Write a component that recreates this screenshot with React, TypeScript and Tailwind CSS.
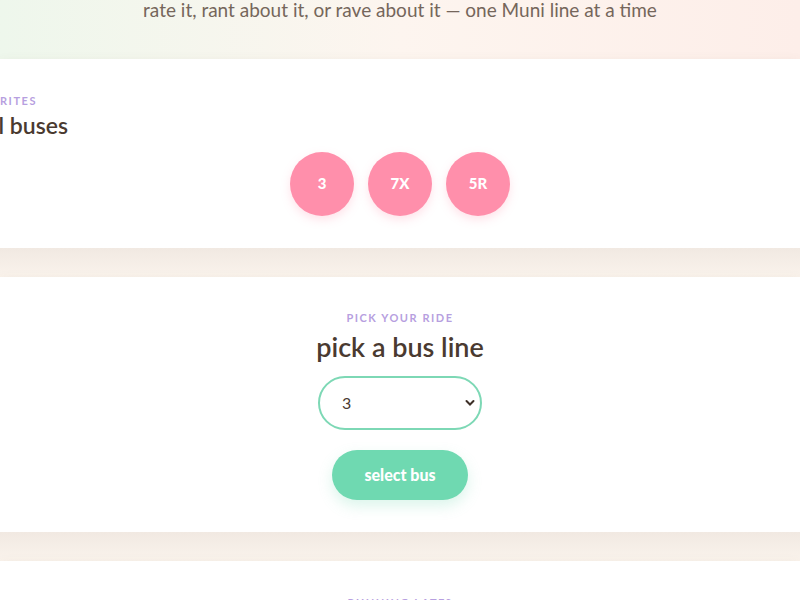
const favorites = ["3", "7X", "5R"];
const lines = ["3", "7X", "5R", "14", "22", "38R", "N"];

const label = "text-[11px] font-bold uppercase tracking-[0.14em] text-[#b79fe0]";
const card = "bg-white shadow-[0_2px_10px_rgba(120,90,60,0.08)]";

export default function App() {
  return (
    <div
      className="min-h-screen overflow-hidden bg-[#faf2ea] text-[#4a3a30]"
      style={{ fontFamily: "Lato, 'Noto Sans', sans-serif" }}
    >
      <header className="flex h-[59px] flex-col bg-gradient-to-r from-[#eef7ec] via-[#fdf5ef] to-[#fdeee9]">
        <p className="-mt-[3px] text-center text-[19px] leading-[26px] text-[#75665b]">
          rate it, rant about it, or rave about it — one Muni line at a time
        </p>
      </header>

      <section className={`${card} h-[189px] pt-[34px]`}>
        <div className="flex w-[37px] justify-end whitespace-nowrap">
          <span className={label}>your favorites</span>
        </div>
        <div className="flex w-[68px] justify-end whitespace-nowrap">
          <h2 className="text-[23px] font-semibold leading-[30px]">your usual buses</h2>
        </div>
        <div className="mt-[12px] flex justify-center gap-[14px]">
          {favorites.map((f) => (
            <button
              key={f}
              className="flex h-16 w-16 items-center justify-center rounded-full bg-[#ff8fab] text-[15px] font-black text-white shadow-[0_4px_10px_rgba(255,143,171,0.25)]"
            >
              {f}
            </button>
          ))}
        </div>
      </section>

      <div className="h-[29px] bg-gradient-to-b from-[#f1e9e2] to-[#faf3ec]" />

      <section className={`${card} flex h-[255px] flex-col items-center pt-[33px]`}>
        <span className={label}>pick your ride</span>
        <h2 className="mt-[2px] text-[27px] font-semibold leading-[36px]">pick a bus line</h2>
        <div className="relative mt-[11px]">
          <select
            defaultValue="3"
            className="h-[54px] w-[164px] appearance-none rounded-full border-2 border-[#7dd8b5] bg-white pl-[22px] text-[16px] text-[#4a3a30] outline-none"
          >
            {lines.map((l) => (
              <option key={l}>{l}</option>
            ))}
          </select>
          <svg
            className="pointer-events-none absolute right-[7px] top-[23px]"
            width="10"
            height="8"
            viewBox="0 0 10 8"
          >
            <path d="M1.5 2 L5 5.5 L8.5 2" fill="none" stroke="#3d2f27" strokeWidth="2" strokeLinecap="round" />
          </svg>
        </div>
        <button className="mt-[20px] h-[50px] w-[136px] rounded-full bg-[#6fd9b1] text-[16px] font-black text-white shadow-[0_6px_14px_rgba(111,217,177,0.25)]">
          select bus
        </button>
      </section>

      <div className="h-[29px] bg-gradient-to-b from-[#f1e9e2] to-[#faf3ec]" />

      <section className={`${card} flex h-[200px] flex-col items-center pt-[34px]`}>
        <span className={label}>running late?</span>
        <h2 className="mt-[2px] text-[28px] font-semibold leading-[36px]">report a delay</h2>
      </section>
    </div>
  );
}
